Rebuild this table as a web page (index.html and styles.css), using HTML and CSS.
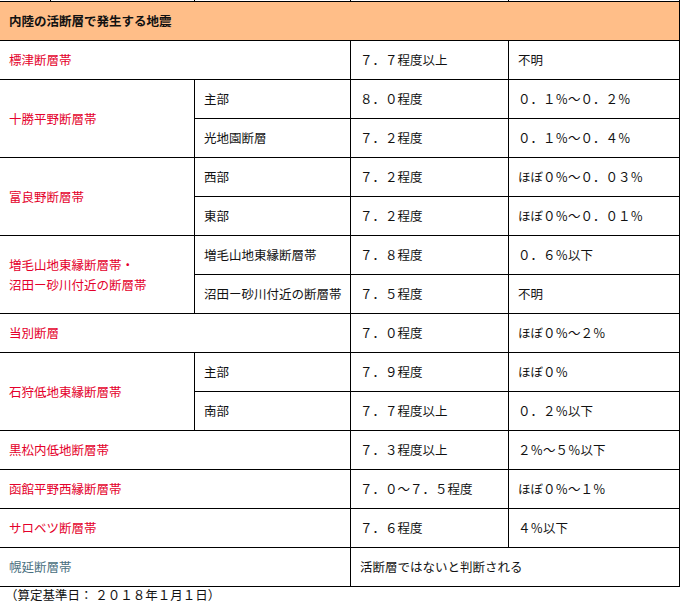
FILE: index.html
```html
<!DOCTYPE html>
<html lang="ja">
<head>
<meta charset="utf-8">
<title>内陸の活断層で発生する地震</title>
<link rel="stylesheet" href="styles.css">
</head>
<body>
<div class="quake-table">
  <div class="cell stub"></div>
  <div class="cell stub"></div>
  <div class="cell stub"></div>
  <div class="cell stub"></div>
  <div class="cell stub"></div>

  <div class="cell head span5">内陸の活断層で発生する地震</div>

  <div class="cell name span3">標津断層帯</div>
  <div class="cell">７．７程度以上</div>
  <div class="cell">不明</div>

  <div class="cell name span2 rows2">十勝平野断層帯</div>
  <div class="cell">主部</div>
  <div class="cell">８．０程度</div>
  <div class="cell">０．１％～０．２％</div>
  <div class="cell">光地園断層</div>
  <div class="cell">７．２程度</div>
  <div class="cell">０．１％～０．４％</div>

  <div class="cell name span2 rows2">富良野断層帯</div>
  <div class="cell">西部</div>
  <div class="cell">７．２程度</div>
  <div class="cell">ほぼ０％～０．０３％</div>
  <div class="cell">東部</div>
  <div class="cell">７．２程度</div>
  <div class="cell">ほぼ０％～０．０１％</div>

  <div class="cell name span2 rows2">増毛山地東縁断層帯・<br>沼田ー砂川付近の断層帯</div>
  <div class="cell">増毛山地東縁断層帯</div>
  <div class="cell">７．８程度</div>
  <div class="cell">０．６％以下</div>
  <div class="cell">沼田ー砂川付近の断層帯</div>
  <div class="cell">７．５程度</div>
  <div class="cell">不明</div>

  <div class="cell name span3">当別断層</div>
  <div class="cell">７．０程度</div>
  <div class="cell">ほぼ０％～２％</div>

  <div class="cell name span2 rows2">石狩低地東縁断層帯</div>
  <div class="cell">主部</div>
  <div class="cell">７．９程度</div>
  <div class="cell">ほぼ０％</div>
  <div class="cell">南部</div>
  <div class="cell">７．７程度以上</div>
  <div class="cell">０．２％以下</div>

  <div class="cell name span3">黒松内低地断層帯</div>
  <div class="cell">７．３程度以上</div>
  <div class="cell">２％～５％以下</div>

  <div class="cell name span3">函館平野西縁断層帯</div>
  <div class="cell">７．０～７．５程度</div>
  <div class="cell">ほぼ０％～１％</div>

  <div class="cell name span3">サロベツ断層帯</div>
  <div class="cell">７．６程度</div>
  <div class="cell">４％以下</div>

  <div class="cell name inactive span3">幌延断層帯</div>
  <div class="cell span2">活断層ではないと判断される</div>
</div>
<p class="note">（算定基準日： ２０１８年１月１日）</p>
</body>
</html>
```

FILE: styles.css
```css
html, body {
  margin: 0;
  padding: 0;
  background: #ffffff;
}

body {
  font-family: "Noto Sans CJK JP", "Noto Sans", sans-serif;
  font-size: 12.5px;
  color: #111111;
}

.quake-table {
  display: grid;
  grid-template-columns: 51px 144px 156px 158px 171px;
  grid-template-rows: 2px repeat(15, 39px);
  width: 680px;
}

.cell {
  box-sizing: border-box;
  border-right: 1px solid #000;
  border-bottom: 1px solid #000;
  display: flex;
  align-items: center;
  padding: 0 9px;
  line-height: 20px;
  white-space: nowrap;
}

.stub {
  padding: 0;
}

.head {
  background: #ffbe88;
  font-weight: bold;
  color: #111111;
}

.name {
  color: #e4002b;
}

.name.inactive {
  color: #4a7080;
}

.span2 { grid-column: span 2; }
.span3 { grid-column: span 3; }
.span5 { grid-column: span 5; }
.rows2 { grid-row: span 2; }

.note {
  margin: 0;
  line-height: 16px;
  padding: 0 0 0 5px;
}
```
